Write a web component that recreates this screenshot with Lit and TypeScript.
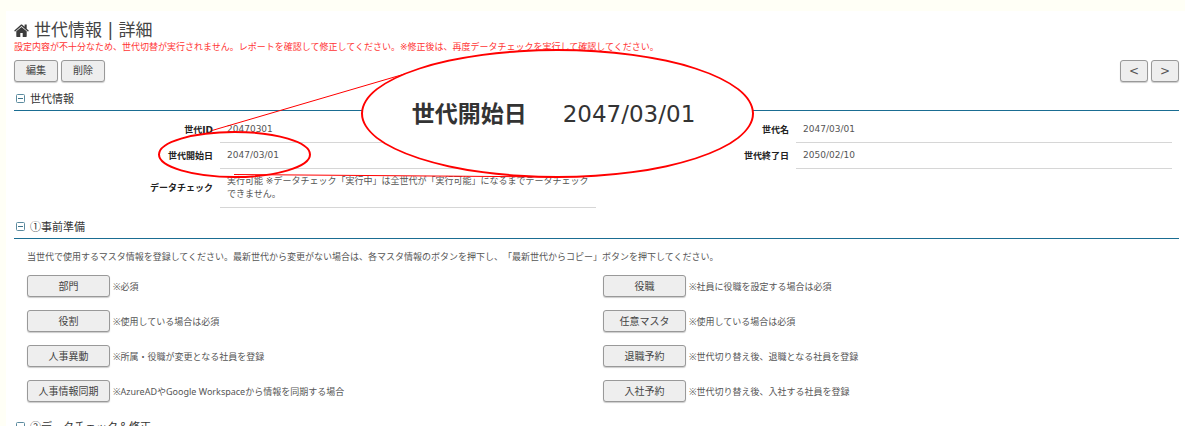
import { LitElement, html, css, svg } from "lit";
import { customElement, property } from "lit/decorators.js";

type Field = { label: string; value: string };
type Task = { label: string; note: string };

const leftFields: Field[] = [
  { label: "世代ID", value: "20470301" },
  { label: "世代開始日", value: "2047/03/01" },
  {
    label: "データチェック",
    value:
      "実行可能 ※データチェック「実行中」は全世代が「実行可能」になるまでデータチェックできません。",
  },
];

const rightFields: Field[] = [
  { label: "世代名", value: "2047/03/01" },
  { label: "世代終了日", value: "2050/02/10" },
];

const tasks: Task[] = [
  { label: "部門", note: "※必須" },
  { label: "役職", note: "※社員に役職を設定する場合は必須" },
  { label: "役割", note: "※使用している場合は必須" },
  { label: "任意マスタ", note: "※使用している場合は必須" },
  { label: "人事異動", note: "※所属・役職が変更となる社員を登録" },
  { label: "退職予約", note: "※世代切り替え後、退職となる社員を登録" },
  { label: "人事情報同期", note: "※AzureADやGoogle Workspaceから情報を同期する場合" },
  { label: "入社予約", note: "※世代切り替え後、入社する社員を登録" },
];

@customElement("section-heading")
class SectionHeading extends LitElement {
  @property() text = "";

  static styles = css`
    :host {
      display: block;
      border-bottom: 1px solid #1a6d92;
    }
    .heading {
      display: flex;
      align-items: center;
      gap: 5px;
      margin: 0;
      padding: 0 2px 3px;
      font-family: "Noto Sans CJK JP", sans-serif;
      font-size: 11px;
      line-height: 17px;
      font-weight: 400;
      color: #333;
    }
    .icon {
      width: 9px;
      height: 9px;
    }
  `;

  render() {
    return html`<h2 class="heading">
      <svg class="icon" viewBox="0 0 9 9" aria-hidden="true">
        <rect x="0.5" y="0.5" width="8" height="8" rx="1" fill="#fff" stroke="#5b8b9f" />
        <path d="M2 4.5h5" stroke="#3f7489" />
      </svg>
      <span>${this.text}</span>
    </h2>`;
  }
}

@customElement("field-list")
class FieldList extends LitElement {
  @property({ attribute: false }) fields: Field[] = [];

  static styles = css`
    .list {
      margin: 0;
      font-size: 9px;
      line-height: 13px;
    }
    .row {
      display: grid;
      grid-template-columns: 200px 1fr;
      align-items: center;
    }
    .label {
      padding-right: 7px;
      text-align: right;
      font-weight: 700;
      color: #222;
    }
    .value {
      margin: 0;
      padding: 6px 7px;
      border-bottom: 1px solid #d6d6d6;
      color: #555;
    }
  `;

  render() {
    return html`<dl class="list">
      ${this.fields.map(
        (f) => html`<div class="row">
          <dt class="label">${f.label}</dt>
          <dd class="value">${f.value}</dd>
        </div>`
      )}
    </dl>`;
  }
}

@customElement("app-root")
class AppRoot extends LitElement {
  static styles = css`
    :host {
      display: block;
      position: relative;
      box-sizing: border-box;
      height: 100vh;
      overflow: hidden;
      padding: 11px 0 0 6px;
      background: #fffff6;
      font-family: "DejaVu Sans", "Noto Sans CJK JP", sans-serif;
      text-spacing-trim: space-all;
      color: #444;
    }
    .panel {
      min-height: 100%;
      box-sizing: border-box;
      padding: 8px 6px 0 8px;
      background: #fff;
    }
    .title {
      display: flex;
      align-items: center;
      gap: 5px;
      margin: 0;
      font-size: 17px;
      line-height: 22px;
      font-weight: 400;
      color: #444;
    }
    .home {
      width: 15px;
      height: 13px;
    }
    .alert {
      margin: 0;
      font-size: 9px;
      line-height: 12px;
      color: #ff3535;
    }
    .toolbar {
      display: flex;
      justify-content: space-between;
      padding: 7px 0 8px;
    }
    .group {
      display: flex;
      gap: 3px;
    }
    .btn {
      box-sizing: border-box;
      width: 44px;
      height: 22px;
      padding: 0;
      border: 1px solid #999;
      border-radius: 3px;
      background: #eee;
      box-shadow: 0 1px 1px #ccc;
      font-family: inherit;
      font-size: 10px;
      line-height: 18px;
      color: #444;
    }
    .step {
      width: 28px;
      font-size: 12px;
      color: #555;
    }
    .wide {
      width: 83px;
      flex: none;
    }
    .fields {
      display: grid;
      grid-template-columns: 1fr 1fr;
      align-items: start;
      padding: 6px 7px 10px 6px;
    }
    .lead {
      margin: 0;
      padding: 12px 13px 11px;
      font-size: 9px;
      line-height: 13px;
      color: #555;
    }
    .tasks {
      display: grid;
      grid-template-columns: 1fr 1fr;
      row-gap: 13px;
      margin: 0;
      padding: 0 0 16px 13px;
      list-style: none;
    }
    .task {
      display: flex;
      align-items: center;
      gap: 3px;
      font-family: "Noto Sans", "Noto Sans CJK JP", sans-serif;
      font-size: 9px;
      line-height: 13px;
      color: #555;
    }
    .marks {
      position: absolute;
      left: 0;
      top: 0;
      width: 1185px;
      height: 426px;
      pointer-events: none;
    }
    .callout {
      position: absolute;
      left: 361px;
      top: 49px;
      box-sizing: border-box;
      width: 393px;
      height: 129px;
      display: flex;
      align-items: center;
      justify-content: center;
      gap: 36px;
      padding-right: 8px;
      border: 2px solid #f00;
      border-radius: 50%;
      background: #fff;
      font-size: 23px;
      line-height: 32px;
      color: #333;
    }
  `;

  render() {
    return html`
      <main class="panel">
        <h1 class="title">
          <svg class="home" viewBox="0 0 15 13" aria-hidden="true">
            <path
              fill="#3c3c3c"
              d="M7.5 2.9 2.3 7.3v5c0 .4.2.7.6.7h3.4V9.1h2.4V13h3.4c.4 0 .6-.3.6-.7v-5zM14.7 6.4l-2-1.7V.9c0-.2-.1-.3-.3-.3h-1.5c-.2 0-.3.1-.3.3v1.9L8.5.9c-.6-.5-1.4-.5-2 0L.3 6.4c-.1.1-.2.3 0 .4l.5.6c.1.1.3.2.4 0L7.5 2l6.3 5.4c.1.1.3.1.4 0l.5-.6c.2-.1.1-.3 0-.4z"
            />
          </svg>
          <span>世代情報 | 詳細</span>
        </h1>
        <p class="alert">設定内容が不十分なため、世代切替が実行されません。レポートを確認して修正してください。※修正後は、再度データチェックを実行して確認してください。</p>
        <div class="toolbar">
          <div class="group">
            <button class="btn" type="button">編集</button>
            <button class="btn" type="button">削除</button>
          </div>
          <div class="group">
            <button class="btn step" type="button">&lt;</button>
            <button class="btn step" type="button">&gt;</button>
          </div>
        </div>
        <section-heading text="世代情報"></section-heading>
        <div class="fields">
          <field-list .fields=${leftFields}></field-list>
          <field-list .fields=${rightFields}></field-list>
        </div>
        <section-heading text="①事前準備"></section-heading>
        <p class="lead">当世代で使用するマスタ情報を登録してください。最新世代から変更がない場合は、各マスタ情報のボタンを押下し、「最新世代からコピー」ボタンを押下してください。</p>
        <ul class="tasks">
          ${tasks.map(
            (t) => html`<li class="task">
              <button class="btn wide" type="button">${t.label}</button>
              <span>${t.note}</span>
            </li>`
          )}
        </ul>
        <section-heading text="②データチェック＆修正"></section-heading>
      </main>
      <svg class="marks" viewBox="0 0 1185 426" fill="none" stroke="#f00" aria-hidden="true">
        ${svg`<path d="M212 130.500L420 69.500M234 174.500L560 177" />
        <ellipse cx="234.500" cy="154.500" rx="75.500" ry="22.500" stroke-width="2" />`}
      </svg>
      <div class="callout"><b>世代開始日</b><span>2047/03/01</span></div>
    `;
  }
}
